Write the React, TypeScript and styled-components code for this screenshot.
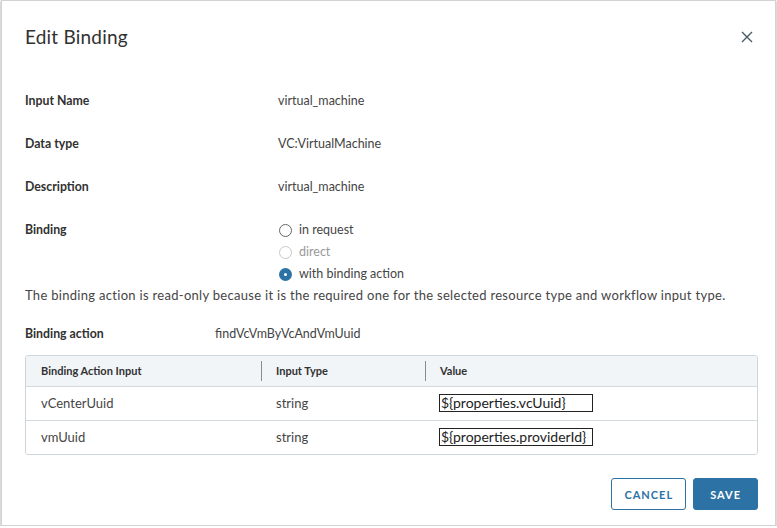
import React from "react";
import styled, { createGlobalStyle } from "styled-components";

const Global = createGlobalStyle`
  html, body { margin: 0; padding: 0; background: #ffffff; }
  body { font-family: "Lato", "Noto Sans", sans-serif; color: #333; }
  * { box-sizing: border-box; }
`;

const Dialog = styled.div`
  margin-left: 1px;
  width: 775px;
  height: 526px;
  border: 1px solid #d2d2d2;
  box-shadow: 0 1px 2px rgba(0, 0, 0, 0.45);
  background: #fff;
  display: flex;
  flex-direction: column;
  padding: 0 17px 0 23px;
`;

const Header = styled.div`
  height: 78px;
  padding-top: 24px;
  display: flex;
  align-items: flex-start;
  justify-content: space-between;
`;

const Title = styled.h1`
  margin: 0;
  font-size: 19px;
  line-height: 24px;
  font-weight: 400;
  color: #313131;
  letter-spacing: 0.2px;
`;

const CloseButton = styled.button`
  border: none;
  background: none;
  padding: 0;
  width: 14px;
  height: 24px;
  margin-right: 4px;
  display: flex;
  align-items: center;
  justify-content: center;
  cursor: pointer;
`;

const Row = styled.div<{ $valueX: number; $last?: boolean }>`
  display: grid;
  grid-template-columns: ${(p) => p.$valueX}px 1fr;
  padding: 11px 0 ${(p) => (p.$last ? 0 : 10)}px;
  line-height: 22px;
`;

const Label = styled.div`
  font-size: 12.3px;
  font-weight: 700;
  color: #313131;
`;

const Value = styled.div`
  font-size: 12.5px;
  color: #444;
`;

const RadioGroup = styled.div`
  display: flex;
  flex-direction: column;
`;

const RadioItem = styled.label<{ $disabled?: boolean }>`
  display: flex;
  align-items: center;
  height: 22px;
  gap: 7px;
  font-size: 12.5px;
  color: ${(p) => (p.$disabled ? "#9a9a9a" : "#454545")};
`;

const RadioCircle = styled.span<{ $checked?: boolean; $disabled?: boolean }>`
  width: 13px;
  height: 13px;
  margin-left: 1px;
  border-radius: 50%;
  border: ${(p) =>
    p.$checked
      ? "5px solid #2d72a4"
      : p.$disabled
      ? "1px solid #c8c8c8"
      : "1px solid #666"};
  background: #fff;
  flex-shrink: 0;
`;

const Note = styled.p`
  margin: 0;
  line-height: 20px;
  font-size: 13px;
  letter-spacing: 0.3px;
  color: #454545;
`;

const ActionRow = styled(Row)`
  margin-top: 18px;
  padding: 0;
`;

const Table = styled.div`
  margin-top: 10px;
  width: 733px;
  border: 1px solid #cfd6db;
  border-radius: 3px;
  overflow: hidden;
`;

const GridRow = styled.div<{ $head?: boolean }>`
  display: grid;
  grid-template-columns: 235px 164px 1fr;
  height: ${(p) => (p.$head ? 30 : 34)}px;
  background: ${(p) => (p.$head ? "#f1f5f8" : "#fff")};
  border-top: ${(p) => (p.$head ? "none" : "1px solid #d4d9dd")};
`;

const HeadCell = styled.div<{ $sep?: boolean }>`
  position: relative;
  display: flex;
  align-items: center;
  padding-left: 15px;
  padding-bottom: 1px;
  font-size: 11px;
  font-weight: 700;
  color: #313131;
  ${(p) =>
    p.$sep &&
    `&::before { content: ""; position: absolute; left: 0; top: 5px; bottom: 5px; width: 1px; background: #8b8b8b; }`}
`;

const Cell = styled.div<{ $pad: number }>`
  display: flex;
  align-items: center;
  padding-left: ${(p) => p.$pad}px;
  padding-bottom: 2px;
  font-size: 13px;
  color: #454545;
`;

const ValueInput = styled.input`
  width: 154px;
  height: 18px;
  border: 1px solid #222;
  border-radius: 0;
  padding: 0 1px;
  font-family: "Lato", "Noto Sans", sans-serif;
  font-size: 14px;
  color: #222;
  background: #fff;
  outline: none;
`;

const Footer = styled.div`
  margin-top: 23px;
  display: flex;
  justify-content: flex-end;
  gap: 7px;
  width: 733px;
`;

const Button = styled.button<{ $primary?: boolean }>`
  height: 32px;
  padding: 0 ${(p) => (p.$primary ? 16 : 12)}px;
  border-radius: 3px;
  border: 1px solid #2d72a4;
  background: ${(p) => (p.$primary ? "#2d72a4" : "#fff")};
  color: ${(p) => (p.$primary ? "#fff" : "#2d72a4")};
  font-family: "Lato", "Noto Sans", sans-serif;
  font-size: 11px;
  font-weight: 700;
  letter-spacing: 1px;
  cursor: pointer;
`;

export default function App() {
  return (
    <>
      <Global />
      <Dialog>
        <Header>
          <Title>Edit Binding</Title>
          <CloseButton aria-label="close">
            <svg width="12" height="12" viewBox="0 0 12 12">
              <path d="M1 1L11 11M11 1L1 11" stroke="#4a5a66" strokeWidth="1.4" />
            </svg>
          </CloseButton>
        </Header>
        <Row $valueX={253}>
          <Label>Input Name</Label>
          <Value>virtual_machine</Value>
        </Row>
        <Row $valueX={253}>
          <Label>Data type</Label>
          <Value>VC:VirtualMachine</Value>
        </Row>
        <Row $valueX={253}>
          <Label>Description</Label>
          <Value>virtual_machine</Value>
        </Row>
        <Row $valueX={253} $last>
          <Label>Binding</Label>
          <RadioGroup>
            <RadioItem>
              <RadioCircle />
              in request
            </RadioItem>
            <RadioItem $disabled>
              <RadioCircle $disabled />
              direct
            </RadioItem>
            <RadioItem>
              <RadioCircle $checked />
              with binding action
            </RadioItem>
          </RadioGroup>
        </Row>
        <Note>
          The binding action is read-only because it is the required one for the selected resource
          type and workflow input type.
        </Note>
        <ActionRow $valueX={190}>
          <Label>Binding action</Label>
          <Value>findVcVmByVcAndVmUuid</Value>
        </ActionRow>
        <Table>
          <GridRow $head>
            <HeadCell>Binding Action Input</HeadCell>
            <HeadCell $sep>Input Type</HeadCell>
            <HeadCell $sep>Value</HeadCell>
          </GridRow>
          <GridRow>
            <Cell $pad={15}>vCenterUuid</Cell>
            <Cell $pad={15}>string</Cell>
            <Cell $pad={14}>
              <ValueInput defaultValue="${properties.vcUuid}" />
            </Cell>
          </GridRow>
          <GridRow>
            <Cell $pad={15}>vmUuid</Cell>
            <Cell $pad={15}>string</Cell>
            <Cell $pad={14}>
              <ValueInput defaultValue="${properties.providerId}" />
            </Cell>
          </GridRow>
        </Table>
        <Footer>
          <Button>CANCEL</Button>
          <Button $primary>SAVE</Button>
        </Footer>
      </Dialog>
    </>
  );
}
